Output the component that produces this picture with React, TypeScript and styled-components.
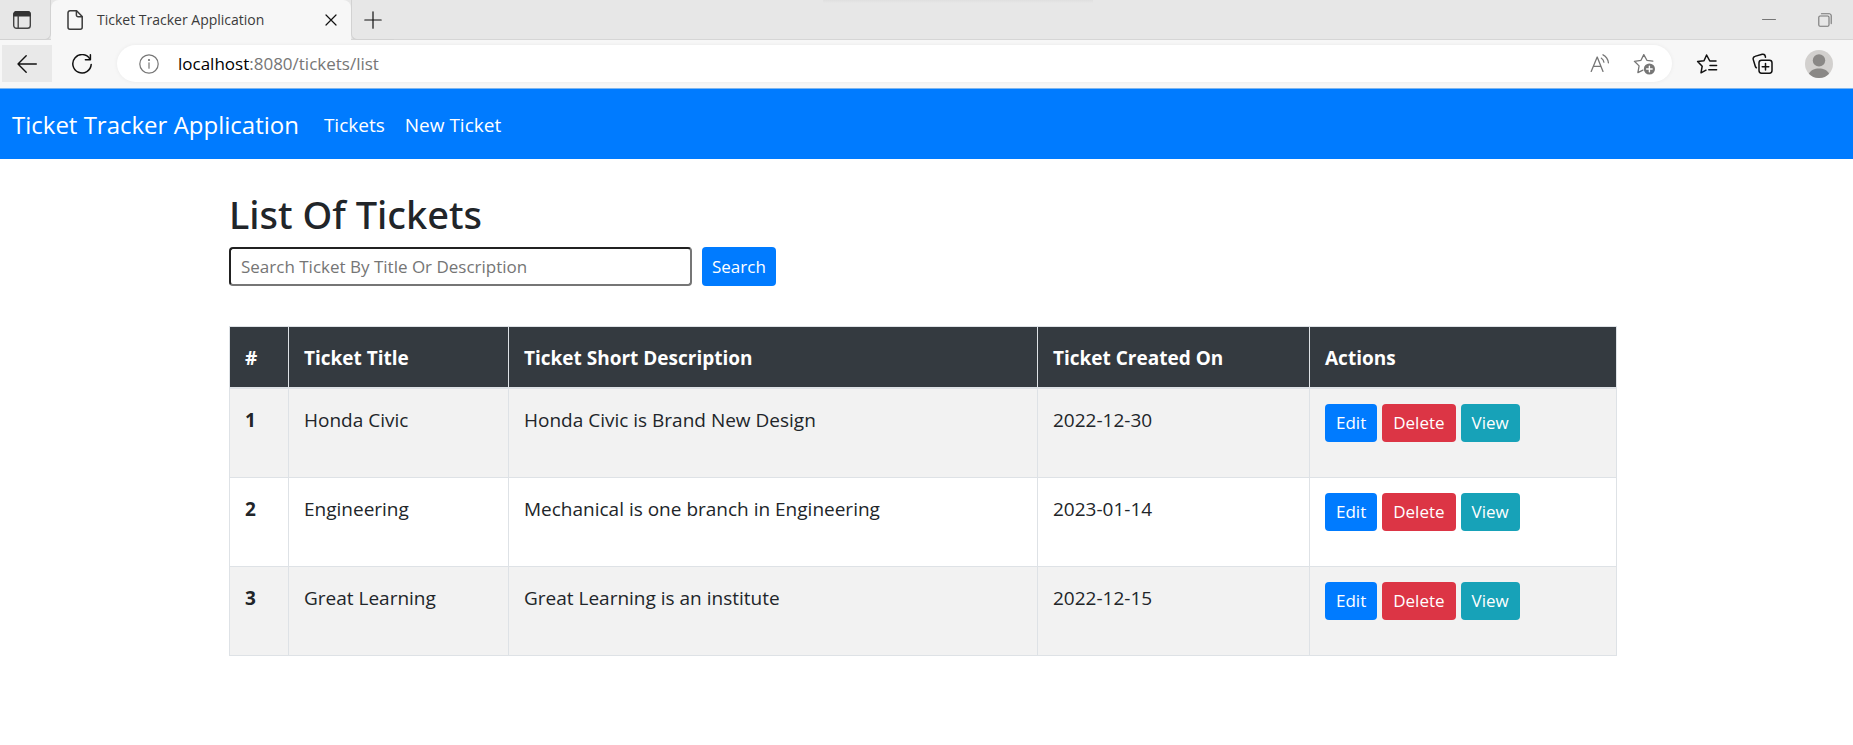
import React from 'react';
import styled, { createGlobalStyle, css } from 'styled-components';

const GlobalStyle = createGlobalStyle`
  *, *::before, *::after { box-sizing: border-box; }
  body {
    margin: 0;
    background: #fff;
    color: #212529;
    font-family: "Open Sans", "Noto Sans", sans-serif;
    font-size: 19px;
    line-height: 32px;
  }
`;

/* ---------- browser window ---------- */

const TabStrip = styled.div`
  display: flex;
  align-items: stretch;
  height: 40px;
  background: linear-gradient(#dfdfdf, #e7e7e7) 52% 0 / 270px 3px no-repeat, #e7e7e7;
  box-shadow: inset 0 -1px 0 #d6d6d6;
`;

const IconButton = styled.button<{ $width: number; $active?: boolean; $muted?: boolean }>`
  display: flex;
  align-items: center;
  justify-content: center;
  flex: none;
  width: ${({ $width }) => $width}px;
  padding: 0;
  border: 0;
  background: ${({ $active }) => ($active ? '#e9e9e9' : 'transparent')};
  color: ${({ $muted }) => ($muted ? '#767676' : '#111')};

  svg { display: block; }
`;

const TabActions = styled.div`
  display: flex;
  flex: none;
  width: 51px;
  padding-left: 2px;
  border-right: 1px solid #d2d2d2;
  border-bottom: 1px solid #d2d2d2;
  border-bottom-right-radius: 6px;
`;

const Tab = styled.div`
  display: flex;
  align-items: center;
  flex: none;
  width: 300px;
  padding: 0 4px 0 14px;
  border-radius: 8px 8px 0 0;
  background: #f7f7f7;
  color: #3b3b3b;
`;

const TabTitle = styled.span`
  flex: 1;
  padding-left: 12px;
  font-size: 14px;
  line-height: 20px;
  white-space: nowrap;
`;

const NewTab = styled.div`
  display: flex;
  border-left: 1px solid #d2d2d2;
  border-bottom: 1px solid #d2d2d2;
  border-bottom-left-radius: 6px;
`;

const WindowControls = styled.div`
  display: flex;
  margin-left: auto;
`;

const Toolbar = styled.div`
  display: flex;
  align-items: stretch;
  height: 49px;
  padding: 5px 6px 6px 2px;
  border-bottom: 1px solid #7db5ee;
  background: #f7f7f7;
`;

const AddressBar = styled.div`
  display: flex;
  align-items: stretch;
  flex: 1;
  min-width: 0;
  margin: 0 7px 0 5px;
  padding: 0 6px 0 12px;
  border-radius: 19px;
  background: #fff;
  box-shadow: 0 0 4px rgba(0, 0, 0, 0.06);
`;

const Url = styled.div`
  flex: 1;
  padding-left: 9px;
  color: #767676;
  font-size: 17px;
  line-height: 38px;
  white-space: nowrap;

  b { color: #000; font-weight: 400; }
`;

/* ---------- application ---------- */

const Navbar = styled.nav`
  display: flex;
  align-items: center;
  gap: 25px;
  height: 70px;
  padding: 2px 12px 0;
  background: #007bff;
`;

const Brand = styled.a`
  color: #fff;
  font-size: 24px;
  line-height: 38px;
  text-decoration: none;
  white-space: nowrap;
`;

const NavLinks = styled.div`
  display: flex;
  gap: 20px;
`;

const NavLink = styled.a`
  color: #fff;
  text-decoration: none;
  white-space: nowrap;
`;

const Main = styled.main`
  padding: 31px 7px 40px 0;
`;

const Container = styled.div`
  max-width: 1388px;
  margin: 0 auto;
`;

const Heading = styled.h1`
  margin: 0 0 9px;
  font-family: "Noto Sans", sans-serif;
  font-size: 38px;
  font-weight: 500;
  line-height: 48px;
`;

const SearchForm = styled.form`
  display: flex;
  gap: 10px;
  height: 39px;
  margin-bottom: 40px;
`;

const SearchInput = styled.input`
  width: 463px;
  padding: 0 10px;
  border: 2px inset #767676;
  border-radius: 4px;
  background: #fff;
  color: #212529;
  font: inherit;
  font-size: 17px;

  &::placeholder { color: #757575; }
`;

const tones = { primary: '#007bff', danger: '#dc3545', info: '#17a2b8' };

const buttonLook = css<{ $tone: keyof typeof tones }>`
  display: inline-flex;
  align-items: center;
  justify-content: center;
  border: 0;
  border-radius: 4px;
  background: ${({ $tone }) => tones[$tone]};
  color: #fff;
  font: inherit;
  font-size: 17px;
  line-height: 38px;
  text-decoration: none;
`;

const SubmitButton = styled.button`
  ${buttonLook}
  padding: 0 10px;
`;

const ActionLink = styled.a`
  ${buttonLook}
  padding: 0 11px;
`;

const Actions = styled.div`
  display: flex;
  gap: 5px;
`;

const Table = styled.table`
  width: 100%;
  table-layout: fixed;
  border-collapse: collapse;
  border: 1px solid #dee2e6;
  text-align: left;
`;

const Col = styled.col<{ $width?: number }>`
  width: ${({ $width }) => ($width ? `${$width}px` : 'auto')};
`;

const HeadCell = styled.th`
  padding: 15px 15px 13px;
  border: 1px solid #dee2e6;
  border-bottom-width: 2px;
  background: #343a40;
  color: #fff;
  font-weight: 700;
`;

const Row = styled.tr`
  height: 89px;

  &:nth-child(odd) { background: #f2f2f2; }
`;

const cell = css`
  padding: 15px;
  border: 1px solid #dee2e6;
  vertical-align: top;
`;

const RowHead = styled.th`${cell} font-weight: 700;`;
const Cell = styled.td`${cell}`;

/* ---------- icons ---------- */

type IconProps = { size: number; stroke?: number; children: React.ReactNode };

const Icon = ({ size, stroke = 1.4, children }: IconProps) => (
  <svg width={size} height={size} viewBox={`0 0 ${size} ${size}`} fill="none" stroke="currentColor"
    strokeWidth={stroke} strokeLinecap="round" strokeLinejoin="round" aria-hidden="true">
    {children}
  </svg>
);

const TabActionsIcon = () => (
  <Icon size={20}>
    <rect x="1.7" y="1.7" width="16.6" height="16.6" rx="2.8" stroke="#444" />
    <path d="M2 5.8V4a2.2 2.2 0 0 1 2.2-2.2h11.6A2.2 2.2 0 0 1 18 4v1.8z" fill="#333" stroke="#333" />
    <path d="M6.2 6v12" stroke="#444" />
  </Icon>
);

const FileIcon = () => (
  <Icon size={20} stroke={1.5}>
    <path d="M5 .8h6.6l5.6 5.8v10.6a2 2 0 0 1-2 2H5a2 2 0 0 1-2-2V2.8a2 2 0 0 1 2-2z" />
    <path d="M11.4 1v4a1.8 1.8 0 0 0 1.8 1.8H17" />
  </Icon>
);

const CloseIcon = () => <Icon size={12} stroke={1.2}><path d="M1 1l10 10M11 1L1 11" /></Icon>;
const PlusIcon = () => <Icon size={18} stroke={1.2}><path d="M9 .8v16.4M.8 9h16.4" /></Icon>;
const BackIcon = () => <Icon size={20}><path d="M19.3 10H1M9.2 1.8L1 10l8.2 8.2" /></Icon>;

const ReloadIcon = () => (
  <Icon size={20} stroke={1.5}>
    <path d="M18 5.2A9.2 9.2 0 1 0 19.2 10.4" />
    <path d="M18.4 .8v4.9h-5" />
  </Icon>
);

const InfoIcon = () => (
  <Icon size={20} stroke={1.2}>
    <circle cx="10" cy="10" r="9.2" />
    <path d="M10 8.8v5.4" />
    <circle cx="10" cy="6" r=".5" fill="currentColor" />
  </Icon>
);

const ReadAloudIcon = () => (
  <Icon size={20} stroke={1.3}>
    <path d="M1.2 17.4L7.2 3 13 17.4M3.4 12.4h7.4" />
    <path d="M11.4 4.2c1.3.8 2.3 2.2 2.5 4M13 .8c2.8 1.4 5 4.2 5.4 8" />
  </Icon>
);

const AddFavoriteIcon = () => (
  <Icon size={24} stroke={1.3}>
    <path d="M20.8 9.2l-5.9-.9L11.8 2.6 9 8.3l-6.6 1 4.7 4.6-1.2 6.8 5-2.6" />
    <circle cx="17.4" cy="17" r="5.6" fill="currentColor" stroke="none" />
    <path d="M17.4 14.2v5.6M14.6 17h5.6" stroke="#fff" strokeWidth="1.4" />
  </Icon>
);

const FavoritesIcon = () => (
  <Icon size={22} stroke={1.5}>
    <path d="M20 8h-6.2L10.6 2 8 7.7 1.6 8.5l4.6 4.7L5 19.8l5-2.6" />
    <path d="M14 12.4h6.6M12.8 16.8h7.8" />
  </Icon>
);

const CollectionsIcon = () => (
  <Icon size={22} stroke={1.5}>
    <rect x="7" y="7.2" width="13" height="13" rx="2.6" />
    <path d="M13.5 10.4V17M10.2 13.7h6.6" />
    <path d="M4.4 14.8A3 3 0 0 1 3.2 13L1.2 6.4a2.4 2.4 0 0 1 1.7-3l7.3-2.1a2.4 2.4 0 0 1 3 1.7l.3 1.2" />
  </Icon>
);

const ProfileIcon = () => (
  <svg width="28" height="28" viewBox="0 0 28 28" aria-hidden="true">
    <circle cx="14" cy="14" r="14" fill="#d2d0ce" />
    <circle cx="14" cy="10.4" r="6.2" fill="#8a8886" />
    <path d="M3.9 23.7C5.6 20 9.4 18.4 14 18.4s8.4 1.6 10.1 5.3A14 14 0 0 1 3.9 23.7z" fill="#8a8886" />
  </svg>
);

const MinimizeIcon = () => <Icon size={14} stroke={1}><path d="M.5 6.5h13" /></Icon>;

const RestoreIcon = () => (
  <Icon size={14} stroke={1.1}>
    <rect x=".8" y="3" width="10.2" height="10.2" rx="1.2" />
    <path d="M3.4.8h7.8a2 2 0 0 1 2 2v7.8" />
  </Icon>
);

/* ---------- page ---------- */

const columns = [
  { label: '#', width: 59 },
  { label: 'Ticket Title', width: 220 },
  { label: 'Ticket Short Description', width: 529 },
  { label: 'Ticket Created On', width: 272 },
  { label: 'Actions' },
];

const tickets = [
  { id: 1, title: 'Honda Civic', description: 'Honda Civic is Brand New Design', created: '2022-12-30' },
  { id: 2, title: 'Engineering', description: 'Mechanical is one branch in Engineering', created: '2023-01-14' },
  { id: 3, title: 'Great Learning', description: 'Great Learning is an institute', created: '2022-12-15' },
];

export default function App() {
  return (
    <>
      <GlobalStyle />
      <header>
        <TabStrip>
          <TabActions>
            <IconButton $width={40} aria-label="Tab actions menu"><TabActionsIcon /></IconButton>
          </TabActions>
          <Tab>
            <FileIcon />
            <TabTitle>Ticket Tracker Application</TabTitle>
            <IconButton $width={32} aria-label="Close tab"><CloseIcon /></IconButton>
          </Tab>
          <NewTab>
            <IconButton $width={42} aria-label="New tab"><PlusIcon /></IconButton>
          </NewTab>
          <WindowControls>
            <IconButton $width={57} $muted aria-label="Minimize"><MinimizeIcon /></IconButton>
            <IconButton $width={56} $muted aria-label="Restore"><RestoreIcon /></IconButton>
          </WindowControls>
        </TabStrip>
        <Toolbar>
          <IconButton $width={50} $active aria-label="Back"><BackIcon /></IconButton>
          <IconButton $width={60} aria-label="Refresh"><ReloadIcon /></IconButton>
          <AddressBar>
            <IconButton $width={40} $muted aria-label="View site information"><InfoIcon /></IconButton>
            <Url><b>localhost</b>:8080/tickets/list</Url>
            <IconButton $width={44} $muted aria-label="Read aloud"><ReadAloudIcon /></IconButton>
            <IconButton $width={44} $muted aria-label="Add to favorites"><AddFavoriteIcon /></IconButton>
          </AddressBar>
          <IconButton $width={56} aria-label="Favorites"><FavoritesIcon /></IconButton>
          <IconButton $width={56} aria-label="Collections"><CollectionsIcon /></IconButton>
          <IconButton $width={56} aria-label="Profile"><ProfileIcon /></IconButton>
        </Toolbar>
      </header>

      <Navbar>
        <Brand href="#">Ticket Tracker Application</Brand>
        <NavLinks>
          <NavLink href="#tickets">Tickets</NavLink>
          <NavLink href="#new">New Ticket</NavLink>
        </NavLinks>
      </Navbar>

      <Main>
        <Container>
          <Heading>List Of Tickets</Heading>
          <SearchForm onSubmit={(e) => e.preventDefault()}>
            <SearchInput type="text" aria-label="Search tickets" placeholder="Search Ticket By Title Or Description" />
            <SubmitButton type="submit" $tone="primary">Search</SubmitButton>
          </SearchForm>
          <Table>
            <colgroup>
              {columns.map((c) => <Col key={c.label} $width={c.width} />)}
            </colgroup>
            <thead>
              <tr>{columns.map((c) => <HeadCell key={c.label} scope="col">{c.label}</HeadCell>)}</tr>
            </thead>
            <tbody>
              {tickets.map((t) => (
                <Row key={t.id}>
                  <RowHead scope="row">{t.id}</RowHead>
                  <Cell>{t.title}</Cell>
                  <Cell>{t.description}</Cell>
                  <Cell>{t.created}</Cell>
                  <Cell>
                    <Actions>
                      <ActionLink href={`#edit-${t.id}`} $tone="primary">Edit</ActionLink>
                      <ActionLink href={`#delete-${t.id}`} $tone="danger">Delete</ActionLink>
                      <ActionLink href={`#view-${t.id}`} $tone="info">View</ActionLink>
                    </Actions>
                  </Cell>
                </Row>
              ))}
            </tbody>
          </Table>
        </Container>
      </Main>
    </>
  );
}
